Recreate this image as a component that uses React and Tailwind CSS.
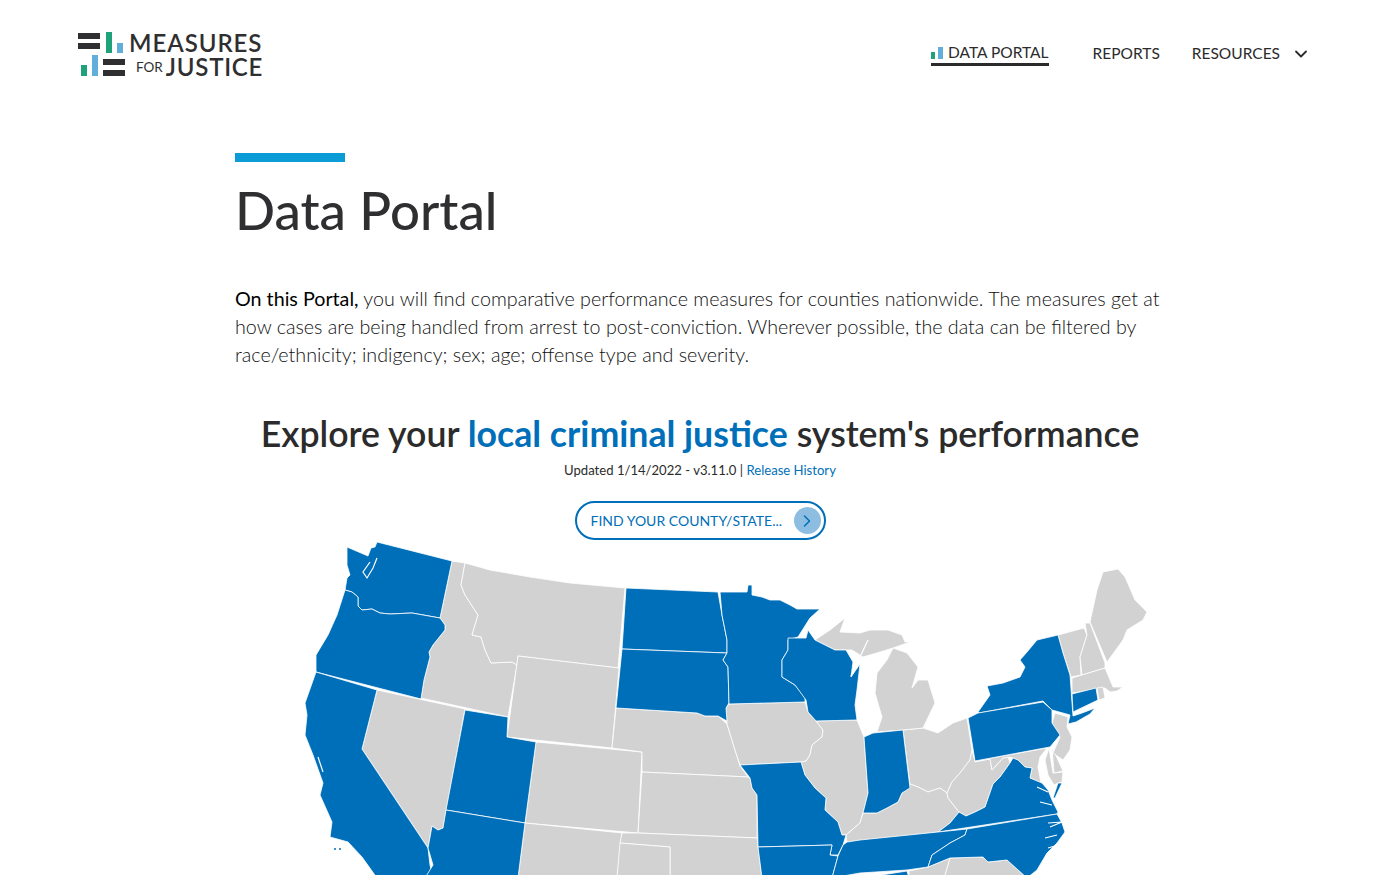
import React from "react";
import { ChevronDown, ChevronRight } from "lucide-react";

const BLUE = "#006fb9";
const GRAY = "#d2d2d2";

const blueStates = [
  "377,542 452,561 440,618 412,613 390,614 380,613 372,609 362,610 358,606 358,597 352,592 345,590 347,578 350,575 347,565 347,547 368,556 371,548 375,547",
  "345,590 352,592 358,597 358,606 362,610 372,609 380,613 390,614 412,613 440,618 445,625 445,630 433,645 429,652 430,657 424,680 421,699 316,672 316,655 328,635 337,615",
  "316,672 377,690 362,749 428,848 430,865 433,878 377,878 362,857 348,842 330,837 332,822 320,795 323,783 313,755 305,735 307,715 305,703",
  "465,710 508,717 507,737 536,742 525,823 446,810",
  "446,810 525,823 518,878 425,878 433,865 428,848 432,826 438,830 443,828",
  "626,588 718,592 722,615 727,640 727,653 622,649",
  "622,649 727,653 723,660 728,667 729,703 726,708 727,721 718,716 705,716 697,713 616,708",
  "720,592 747,592 748,585 752,585 752,595 762,597 770,600 780,600 790,605 797,609 820,609 810,618 798,637 788,640 788,650 782,660 782,677 795,685 805,697 805,702 729,704 728,667 723,660 727,653 727,640 722,615",
  "788,638 806,638 808,630 815,640 835,650 846,650 853,662 851,677 860,664 857,690 855,705 857,720 816,721 808,712 806,700 795,685 782,677 782,660 788,650",
  "740,765 801,762 805,775 815,788 826,798 825,810 838,822 842,835 846,835 843,845 838,855 830,855 832,845 758,847 757,795 752,788 750,778",
  "758,847 832,845 830,855 838,856 832,878 762,878",
  "864,737 873,733 903,730 910,788 902,793 898,802 887,808 877,813 863,813 868,793",
  "1010,763 1013,758 1018,760 1025,767 1032,768 1030,778 1042,783 1048,790 1052,800 1058,812 1057,814 938,832 950,823 959,812 966,816 975,812 985,807 993,784 1000,777",
  "847,842 860,840 938,832 967,829 965,835 950,843 932,855 928,867 907,870 860,873 832,878 838,856 843,845",
  "967,829 1057,814 1062,823 1065,832 1057,843 1047,853 1037,870 1027,878 1007,860 988,862 983,857 950,858 928,867 932,855 950,843 965,835",
  "862,878 907,871 909,878",
  "1058,635 1037,640 1027,652 1020,660 1025,667 1020,677 1003,683 987,686 990,695 978,712 979,713 1043,701 1052,710 1070,715 1068,724 1076,722 1090,714 1095,708 1082,713 1073,716 1070,675 1063,653",
  "968,718 978,713 1043,702 1052,710 1052,723 1060,735 1050,747 975,761",
  "1072,694 1096,688 1098,700 1073,712",
  "1058,783 1062,783 1055,798 1053,798",
];

const grayStates = [
  "452,561 465,563 461,585 465,595 478,615 472,635 481,637 485,650 491,663 512,662 517,665 508,717 421,698 424,680 430,657 429,652 433,645 445,630 445,625 440,618",
  "465,563 490,570 530,577 570,583 625,588 618,668 518,656 517,665 512,662 491,663 485,650 481,637 472,635 478,615 465,595 461,585",
  "518,656 619,668 612,748 507,737",
  "377,690 465,709 443,828 438,830 432,826 428,848 362,749",
  "536,742 642,752 638,833 525,823",
  "616,708 697,713 705,716 718,716 727,724 735,750 740,766 748,777 642,772 642,752 612,748",
  "642,772 748,777 750,778 752,788 757,795 757,838 638,833",
  "525,823 622,833 617,878 518,878",
  "638,833 757,838 762,878 670,878 670,847 620,843 622,833",
  "620,843 670,847 670,878 617,878",
  "729,704 805,702 808,712 816,721 823,730 822,737 812,745 810,755 806,761 801,762 740,765 735,750 727,724 726,708",
  "816,721 857,720 864,737 868,793 863,813 860,823 846,835 842,835 838,822 825,810 826,798 815,788 805,775 801,762 806,761 810,755 812,745 822,737 823,730",
  "903,730 923,728 938,733 953,723 967,718 972,750 970,760 960,773 952,782 947,793 940,788 928,792 918,787 910,784",
  "877,732 882,717 875,693 877,673 887,660 893,648 907,653 918,667 912,688 918,680 928,680 935,703 923,728 903,730",
  "815,640 830,630 845,618 840,632 860,633 870,630 888,630 902,635 905,642 910,642 893,648 880,652 863,657 852,650 835,650",
  "846,835 860,823 863,813 877,813 887,808 898,802 902,793 910,784 918,787 928,792 940,788 947,793 948,798 959,812 950,823 938,832 913,835 847,842",
  "947,793 952,782 960,773 970,760 972,750 975,762 990,759 992,770 1003,758 1008,757 1010,763 1000,777 993,784 985,807 975,812 966,816 959,812 948,798",
  "975,761 1047,748 1040,757 1038,767 1041,783 1030,778 1032,768 1023,767 1018,760 1010,757 1003,758 992,770 990,759",
  "1049,748 1053,773 1063,772 1062,782 1058,783 1054,785 1048,775 1045,760",
  "1052,747 1063,771 1054,773",
  "1055,713 1068,717 1067,727 1072,737 1070,750 1063,760 1053,753 1060,737 1052,723",
  "1058,635 1084,628 1087,635 1080,657 1081,675 1071,677 1063,653",
  "1085,623 1090,623 1105,663 1105,668 1082,675 1080,657 1087,635",
  "1090,622 1097,590 1103,572 1118,569 1125,577 1135,600 1147,612 1143,620 1127,630 1123,640 1107,662",
  "1072,678 1105,668 1113,687 1123,687 1117,691 1110,692 1105,688 1072,693",
  "1097,688 1103,687 1105,698 1099,700",
  "950,858 983,857 988,862 1007,860 1027,878 944,878",
  "909,871 928,867 950,858 944,878 909,878",
];

// inlets that cut through the blue and grey fill
const inlets = [
  "M370 562 L363 572 L367 578 L373 568 L377 558",
  "M318 757 L323 772",
  "M1037 787 L1048 792 M1040 802 L1052 805",
  "M1048 823 L1062 822 L1050 827 M1045 838 L1057 835 M1048 848 L1058 845",
  "M820 632 L838 612",
  "M851 676 L868 640",
];

function LogoMark() {
  return (
    <svg width="47" height="44" viewBox="78 32 47 44" className="shrink-0">
      <rect x="78" y="33" width="22" height="6" fill="#2f2f31" />
      <rect x="78" y="43" width="22" height="6" fill="#2f2f31" />
      <rect x="106" y="32" width="6" height="21" fill="#1fa27a" />
      <rect x="117" y="43" width="6" height="10" fill="#62aedb" />
      <rect x="81" y="65" width="6" height="11" fill="#1fa27a" />
      <rect x="92" y="55" width="6" height="21" fill="#62aedb" />
      <rect x="103" y="59" width="22" height="6" fill="#2f2f31" />
      <rect x="103" y="70" width="22" height="6" fill="#2f2f31" />
    </svg>
  );
}

function Header() {
  return (
    <header className="flex items-start justify-between h-[153px] pl-[78px] pr-[89px] pt-[32px]">
      <div className="flex gap-[4px]">
        <LogoMark />
        <div className="text-[#2f2f31] font-semibold">
          <div className="text-[24px] leading-[21px] tracking-[0.95px]">MEASURES</div>
          <div className="flex items-center leading-[24px] mt-[2px]">
            <span className="text-[13.5px] font-normal ml-[7px] mr-[3px]">FOR</span>
            <span className="text-[24px] tracking-[0.75px]">JUSTICE</span>
          </div>
        </div>
      </div>
      <nav className="flex items-center text-[#2b2b2b] text-[15.5px] mt-[10px]">
        <a className="flex items-center gap-[5px] border-b-[3px] border-[#2b2b2b] h-[24px] pt-[1px] mr-[44px]">
          <svg width="12" height="12" viewBox="0 0 12 12" className="mb-[1px]">
            <rect x="0" y="5" width="4" height="7" fill="#1fa27a" />
            <rect x="7" y="0" width="5" height="12" fill="#62aedb" />
          </svg>
          <span>DATA PORTAL</span>
        </a>
        <a className="mr-[32px]">REPORTS</a>
        <a className="mr-[11px]">RESOURCES</a>
        <ChevronDown size={20} strokeWidth={2.2} />
      </nav>
    </header>
  );
}

function UsMap() {
  return (
    <svg viewBox="235 541 930 334" className="block w-[930px] h-[334px] mt-[1px]">
      {grayStates.map((p, i) => (
        <polygon key={i} points={p} fill={GRAY} stroke="#fff" strokeWidth="0.8" strokeLinejoin="round" />
      ))}
      {blueStates.map((p, i) => (
        <polygon key={i} points={p} fill={BLUE} stroke="#fff" strokeWidth="0.8" strokeLinejoin="round" />
      ))}
      {inlets.map((d, i) => (
        <path key={i} d={d} fill="none" stroke="#fff" strokeWidth="1.2" />
      ))}
      <circle cx="335" cy="849" r="1" fill={BLUE} />
      <circle cx="340" cy="849" r="1" fill={BLUE} />
    </svg>
  );
}

export default function App() {
  return (
    <div className="bg-white h-[875px] overflow-hidden font-['Lato',sans-serif]">
      <Header />
      <main className="w-[930px] ml-[235px]">
        <div className="w-[110px] h-[9px] bg-[#0b9bd7]" />
        <h1 className="text-[52.8px] leading-[62px] font-medium text-[#2f2f31] mt-[17px]">Data Portal</h1>
        <p className="mt-[44px] text-[19.7px] leading-[28px] font-light text-[#111]">
          <span className="font-normal text-black">On this Portal,</span> you will find comparative performance measures for counties nationwide. The measures get at how cases are being handled from arrest to post-conviction. Wherever possible, the data can be filtered by race/ethnicity; indigency; sex; age; offense type and severity.
        </p>
        <h2 className="mt-[42px] text-center text-[35.66px] leading-[46px] font-semibold text-[#2b2b2b]">
          Explore your <span className="text-[#006fb9] font-bold">local criminal justice</span> system's performance
        </h2>
        <p className="text-center text-[13.1px] leading-[20px] text-[#2b2b2b] mt-[3px]">
          Updated 1/14/2022 - v3.11.0 | <a className="text-[#006fb9]">Release History</a>
        </p>
        <div className="flex justify-center mt-[21px]">
          <button className="flex items-center justify-between w-[251px] h-[39px] pl-[14px] pr-[3px] border-2 border-[#006fb9] rounded-full text-[#006fb9] text-[14px] whitespace-nowrap">
            <span>FIND YOUR COUNTY/STATE...</span>
            <span className="flex items-center justify-center w-[27px] h-[27px] rounded-full bg-[#8dbde0]">
              <ChevronRight size={20} strokeWidth={1.75} />
            </span>
          </button>
        </div>
        <UsMap />
      </main>
    </div>
  );
}
